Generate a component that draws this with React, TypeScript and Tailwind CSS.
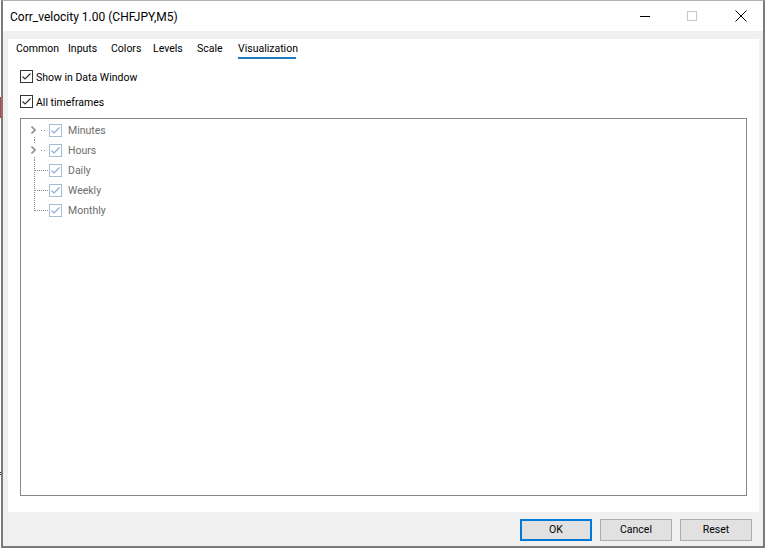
import React from "react";

const font = { fontFamily: 'Roboto, "Noto Sans", sans-serif' };

const Check = ({ disabled }: { disabled?: boolean }) => (
    <svg width="13" height="13" viewBox="0 0 13 13" className="shrink-0">
        <rect x="0.5" y="0.5" width="12" height="12" fill="#fff" stroke={disabled ? "#a7bdd1" : "#333"} />
        <polyline
            points="2.5,6.5 5,9 10.5,3.5"
            fill="none"
            stroke={disabled ? "#86acd0" : "#333"}
            strokeWidth="1.2"
        />
    </svg>
);

type Node = { label: string; kind: "first" | "mid" | "leaf" | "last" };

const nodes: Node[] = [
    { label: "Minutes", kind: "first" },
    { label: "Hours", kind: "mid" },
    { label: "Daily", kind: "leaf" },
    { label: "Weekly", kind: "leaf" },
    { label: "Monthly", kind: "last" },
];

const Connector = ({ kind }: { kind: Node["kind"] }) => {
    const hasChevron = kind === "first" || kind === "mid";
    return (
        <svg width="28" height="20" viewBox="0 0 28 20" className="shrink-0">
            {hasChevron && (
                <>
                    <polyline points="10.5,6.5 14,10 10.5,13.5" fill="none" stroke="#8a8a8a" strokeWidth="1.6" />
                    <rect x="20" y="10" width="1" height="1" fill="#8a8a8a" />
                    <rect x="23" y="10" width="1" height="1" fill="#8a8a8a" />
                    {kind === "first" && (
                        <line x1="13.5" y1="17" x2="13.5" y2="20" stroke="#8a8a8a" strokeDasharray="1 1" />
                    )}
                    {kind === "mid" && (
                        <>
                            <line x1="13.5" y1="0" x2="13.5" y2="3" stroke="#8a8a8a" strokeDasharray="1 1" />
                            <line x1="13.5" y1="17" x2="13.5" y2="20" stroke="#8a8a8a" strokeDasharray="1 1" />
                        </>
                    )}
                </>
            )}
            {!hasChevron && (
                <>
                    <line
                        x1="13.5"
                        y1="0"
                        x2="13.5"
                        y2={kind === "last" ? 11 : 20}
                        stroke="#8a8a8a"
                        strokeDasharray="1 1"
                    />
                    <line x1="14" y1="10.5" x2="27" y2="10.5" stroke="#8a8a8a" strokeDasharray="1 1" />
                </>
            )}
        </svg>
    );
};

const tabs = [
    { label: "Common", w: "w-[52px]" },
    { label: "Inputs", w: "w-[43px]" },
    { label: "Colors", w: "w-[42px]" },
    { label: "Levels", w: "w-[44px]" },
    { label: "Scale", w: "w-[41px]" },
    { label: "Visualization", w: "w-[70px]" },
];

const App = () => {
    return (
        <div className="w-[766px] h-[549px] bg-white overflow-hidden text-[10.5px] text-black flex" style={font}>
            {/* background sliver outside the dialog */}
            <div className="w-[1px] shrink-0 flex flex-col">
                <div className="h-[97px]" />
                <div className="h-[21px] bg-[#d33a3a]" />
                <div className="h-[354px]" />
                <div className="h-[1px] bg-[#333]" />
                <div className="h-[1px]" />
                <div className="h-[1px] bg-[#333]" />
            </div>

            <div className="w-[764px] h-[548px] border-x-2 border-b-2 border-t border-[#7a7a7a] border-t-[#b0b0b0] flex flex-col">
                {/* title bar */}
                <div className="h-[30px] flex items-center bg-white shrink-0">
                    <span className="pl-[7px] pt-[1px] text-[12px]">Corr_velocity 1.00 (CHFJPY,M5)</span>
                    <div className="ml-auto flex items-center h-full">
                        <div className="w-[40px] h-full flex items-center justify-center">
                            <div className="w-[10px] h-[1px] bg-black" />
                        </div>
                        <div className="w-[54px] h-full flex items-center justify-center">
                            <div className="w-[10px] h-[10px] border border-[#c8c8c8]" />
                        </div>
                        <div className="w-[44px] h-full flex items-center justify-center">
                            <svg width="12" height="12" viewBox="0 0 12 12">
                                <path d="M0.5 0.5L11.5 11.5M11.5 0.5L0.5 11.5" stroke="#000" strokeWidth="1" />
                            </svg>
                        </div>
                    </div>
                </div>

                {/* body */}
                <div className="flex-1 bg-[#f0f0f0] flex flex-col pt-[8px] pl-[5px] pr-[4px]">
                    <div className="bg-white h-[473px] flex flex-col">
                        <div className="flex pl-[8px] pt-[1px] h-[20px] items-start">
                            {tabs.map((t) => (
                                <div key={t.label} className={`${t.w} flex flex-col items-start`}>
                                    <span className="leading-[17px]">{t.label}</span>
                                    {t.label === "Visualization" && <div className="w-[58px] h-[2px] bg-[#1a7ac4]" />}
                                </div>
                            ))}
                        </div>

                        <div className="flex flex-col pl-[12px] pt-[11px] gap-[12px]">
                            <label className="flex items-center gap-[3px] h-[13px]">
                                <Check />
                                <span className="leading-[13px] pt-[1px]">Show in Data Window</span>
                            </label>
                            <label className="flex items-center gap-[3px] h-[13px]">
                                <Check />
                                <span className="leading-[13px] pt-[1px]">All timeframes</span>
                            </label>
                        </div>

                        <div className="ml-[12px] mt-[10px] w-[727px] h-[378px] border border-[#828790] bg-white pt-[1px]">
                            {nodes.map((n) => (
                                <div key={n.label} className="flex items-center h-[20px]">
                                    <Connector kind={n.kind} />
                                    <Check disabled />
                                    <span className="ml-[6px] pt-[2px] text-[#6d6d6d]">{n.label}</span>
                                </div>
                            ))}
                        </div>
                    </div>

                    <div className="flex justify-end gap-[8px] pt-[7px] pr-[7px]">
                        <button className="w-[72px] h-[22px] border-2 border-[#0078d7] bg-[#e1e1e1]">OK</button>
                        <button className="w-[72px] h-[22px] border border-[#adadad] bg-[#e1e1e1]">Cancel</button>
                        <button className="w-[72px] h-[22px] border border-[#adadad] bg-[#e1e1e1]">Reset</button>
                    </div>
                </div>
            </div>
        </div>
    );
};

export default App;
